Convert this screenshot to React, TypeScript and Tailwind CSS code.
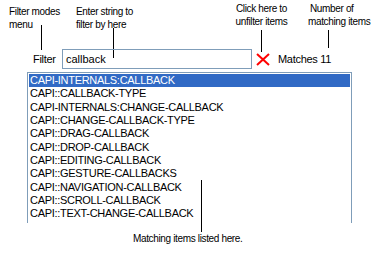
import React from "react";

const items = [
  "CAPI-INTERNALS:CALLBACK",
  "CAPI::CALLBACK-TYPE",
  "CAPI-INTERNALS:CHANGE-CALLBACK",
  "CAPI::CHANGE-CALLBACK-TYPE",
  "CAPI::DRAG-CALLBACK",
  "CAPI::DROP-CALLBACK",
  "CAPI::EDITING-CALLBACK",
  "CAPI::GESTURE-CALLBACKS",
  "CAPI::NAVIGATION-CALLBACK",
  "CAPI::SCROLL-CALLBACK",
  "CAPI::TEXT-CHANGE-CALLBACK",
];

const font = { fontFamily: '"Liberation Sans", Arial, sans-serif' };

export default function App() {
  return (
    <div className="flex flex-col w-[379px] h-[258px] bg-white overflow-hidden text-black" style={font}>
      {/* callout notes above the controls */}
      <div className="flex items-start h-[49px] text-[10px] leading-[13px] tracking-[-0.35px] whitespace-nowrap">
        <div className="flex flex-col ml-[9px] w-[67px] pt-[5px]">
          <div>Filter modes</div>
          <div>menu</div>
          <div className="w-px h-[25px] bg-black ml-[32px] mt-[-6px]" />
        </div>
        <div className="flex flex-col w-[158px] pt-[5px]">
          <div>Enter string to</div>
          <div>filter by here</div>
          <div className="w-px h-[30px] bg-black ml-[37px] mt-[-3px]" />
        </div>
        <div className="flex flex-col items-center w-[55px] pt-[2px]">
          <div>Click here to</div>
          <div>unfilter items</div>
          <div className="w-px h-[22px] bg-black mt-[2px]" />
        </div>
        <div className="flex flex-col ml-[19px] pt-[2px]">
          <div className="pl-[2px]">Number of</div>
          <div>matching items</div>
          <div className="w-px h-[18px] bg-black ml-[20px] mt-[2px]" />
        </div>
      </div>

      {/* filter row */}
      <div className="flex items-center h-[20px] pl-[33px]">
        <div className="w-[29px] text-[11px] tracking-[-0.3px]">Filter</div>
        <div className="w-[190px] h-[20px] border border-[#7f9db9] flex items-center px-[3px] text-[11px]">
          callback
        </div>
        <svg className="ml-[4px]" width="14" height="13" viewBox="0 0 14 13">
          <line x1="1" y1="1" x2="13" y2="12" stroke="#ff0000" strokeWidth="2" />
          <line x1="13" y1="1" x2="1" y2="12" stroke="#ff0000" strokeWidth="2" />
        </svg>
        <div className="ml-[8px] text-[11px] tracking-[-0.3px]">Matches 11</div>
      </div>

      {/* list */}
      <div className="ml-[27px] mt-[3px] w-[325px] h-[151px] shrink-0 border-t border-l border-r border-[#7f9db9] p-[1px] pb-0">
        {items.map((it, i) => (
          <div
            key={it}
            className={
              "h-[13.33px] leading-[13.33px] text-[11px] tracking-[-0.3px] pl-[1px] whitespace-nowrap " +
              (i === 0 ? "bg-[#316ac5] text-white" : "")
            }
          >
            {it}
          </div>
        ))}
      </div>

      {/* bottom callout */}
      <div className="flex flex-col ml-[133px] text-[10px] leading-[13px] tracking-[-0.35px] whitespace-nowrap">
        <div className="w-px h-[52px] bg-black ml-[68px] mt-[-43px]" />
        <div>Matching items listed here.</div>
      </div>
    </div>
  );
}
